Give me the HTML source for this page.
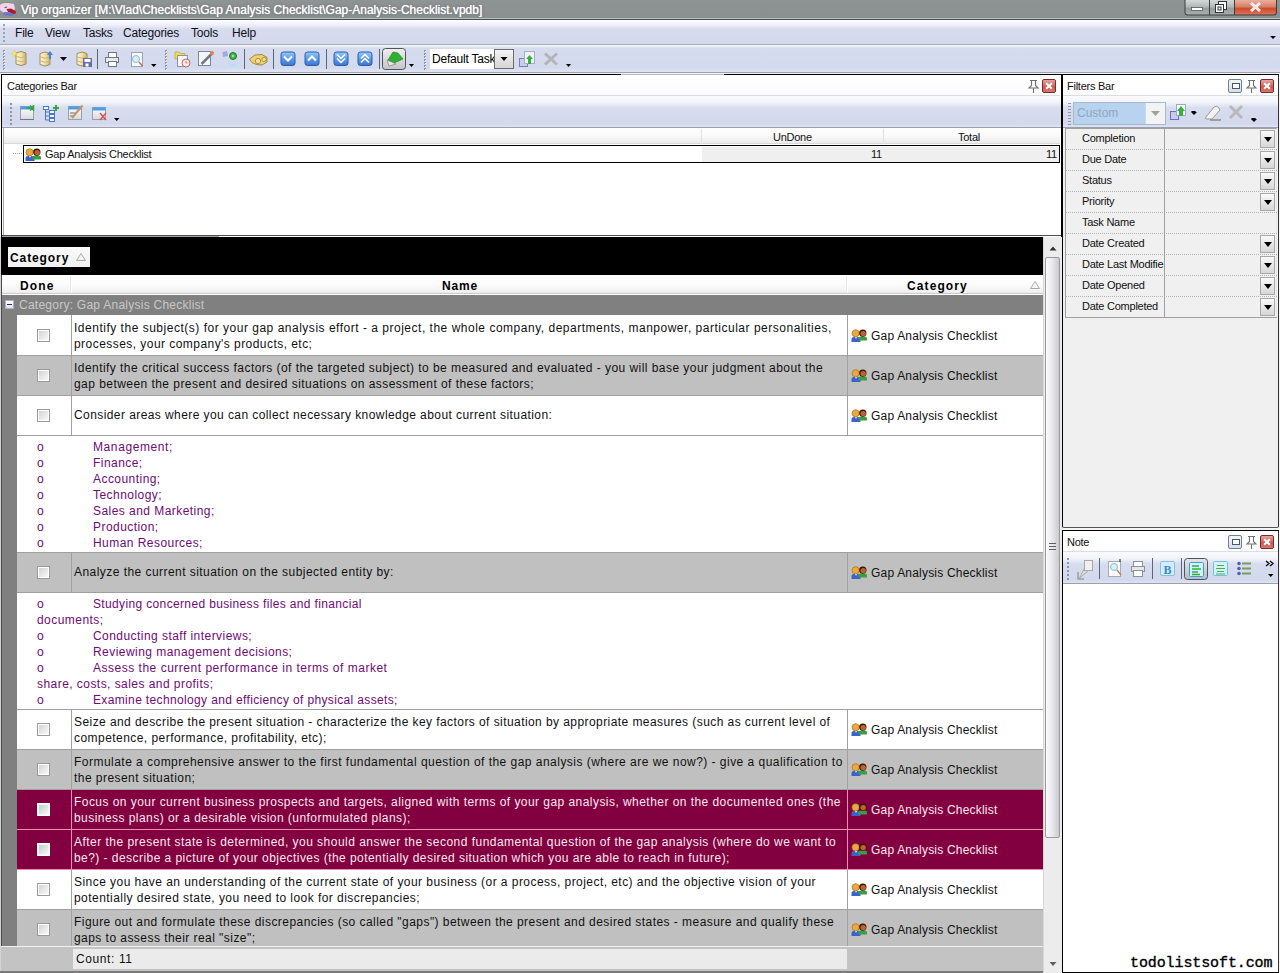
<!DOCTYPE html>
<html><head><meta charset="utf-8">
<style>
*{box-sizing:border-box;margin:0;padding:0}
html,body{width:1280px;height:973px;overflow:hidden;background:#f4f4f4;font-family:"Liberation Sans",sans-serif;}
.a{position:absolute}
.nw{white-space:nowrap}
/* title */
#title{left:0;top:0;width:1280px;height:18px;background:linear-gradient(#8e9494,#8a9090);}
#title .t{left:21px;top:2px;font-size:12px;color:#fff;text-shadow:0 0 1px #fff,0 0 3px #4a5050;line-height:16px}
#menubar{left:0;top:20px;width:1280px;height:25px;background:linear-gradient(#fdfdff 0px,#eef0f8 5px,#d6dcee 9px,#d3d9ec 24px);border-bottom:1px solid #a9adb8}
.menu{top:6px;font-size:12px;letter-spacing:-0.2px;color:#101018;line-height:15px}
#toolbar{left:0;top:46px;width:1280px;height:27px;background:linear-gradient(#f0f2fa 0px,#d6dcee 2px,#d4daee 22px,#dfe3f3 25px);border-bottom:1px solid #9da2ad}
.grip{width:3px;background:repeating-linear-gradient(#8e96a8 0 1px,transparent 1px 3px)}
.sep{width:1px;background:#6f7a90;border-right:1px solid #fff;box-sizing:content-box}
/* panels */
.panel{border:1px solid #000;background:#fff}
.ptitle{font-size:11px;letter-spacing:-0.25px;color:#111;line-height:14px}
.ptb{background:linear-gradient(#fafbfe 0px,#f3f5fb 6px,#d7ddef 12px,#d3d9ec 28px,#dfe3f3 31px);border-bottom:1px solid #9aa0ac}
.gtext{font-size:12px;letter-spacing:0.45px;line-height:16px;color:#111}

/* grid */
.row{left:17px;width:1027px;border-bottom:1px solid #a0a0a0}
.row::before{content:"";position:absolute;left:54px;top:0;bottom:0;width:1px;background:#a0a0a0}
.row::after{content:"";position:absolute;left:830px;top:0;bottom:0;width:1px;background:#a0a0a0}
.rw{background:#fff}.rg{background:#c0c0c0}
.rr{background:#82003f;border-bottom-color:#e88fb4}
.rr::before,.rr::after{background:#e88fb4}
.rr .gtext{color:#fbe8f0}
.cb{left:20px;width:13px;height:13px;border:1px solid #9a9a9a;background:linear-gradient(135deg,#cfcfcf 0%,#f4f4f4 80%);box-shadow:inset 0 0 0 1px #fff}
.rr .cb{border-color:#fff;background:linear-gradient(135deg,#b9cbc4 0%,#eef2f0 80%);box-shadow:inset 0 0 0 1px #f6f6f6}
.txt{left:57px}
.cat{left:834px;width:190px;height:16px}
.ppl{left:0;top:1px;width:16px;height:13px}
.prev{left:17px;width:1027px;background:#fff;border-bottom:1px solid #a0a0a0}
.pl{font-size:12px;letter-spacing:0.45px;line-height:16px;color:#720a72}
.hdr{font-size:12px;font-weight:bold;letter-spacing:0.8px;line-height:16px;color:#000}

.xbtn{width:14px;height:14px;border:1px solid #7a2a2a;border-radius:2px;background:linear-gradient(#e6a4a0,#c85a50 60%,#d87870)}
.xbtn::before,.xbtn::after{content:"";position:absolute;left:2px;top:5px;width:8px;height:2px;background:#fff;transform:rotate(45deg)}
.xbtn::after{transform:rotate(-45deg)}
.fbtn{width:14px;height:14px;border:1px solid #6f7f96;border-radius:2px;background:linear-gradient(#f4f6fa,#d8dee8)}
.fbtn::before{content:"";position:absolute;left:3px;top:3px;width:6px;height:4px;border:1px solid #4a586e;background:#fff}
.prow{left:3px;width:211px;height:21px;border-bottom:1px dotted #b4b4b4}
.ddb{left:194px;top:1px;width:15px;height:18px;border:1px solid #a8a8a8;background:linear-gradient(#fafafa,#d6d6d6)}
.ddb::before{content:"";position:absolute;left:3px;top:6px;border-left:4px solid transparent;border-right:4px solid transparent;border-top:5px solid #000}
.arr{width:0;height:0;border-left:3px solid transparent;border-right:3px solid transparent;border-top:3px solid #000}
</style></head><body>
<div id="title" class="a">
  <div class="a t nw">Vip organizer [M:\Vlad\Checklists\Gap Analysis Checklist\Gap-Analysis-Checklist.vpdb]</div>
</div>
<div class="a" style="left:0;top:18px;width:1280px;height:1px;background:#b8bdbd"></div>
<div class="a" style="left:0;top:19px;width:1280px;height:1px;background:#4a5050"></div>
<div id="menubar" class="a">
  <svg class="a" style="left:2px;top:3px" width="4" height="20"><g fill="#9aa2b4"><rect x="1" y="1" width="2" height="2"/><rect x="1" y="5" width="2" height="2"/><rect x="1" y="9" width="2" height="2"/><rect x="1" y="13" width="2" height="2"/><rect x="1" y="17" width="2" height="2"/></g></svg>
  <div class="a menu nw" style="left:15px">File</div>
  <div class="a menu nw" style="left:45px">View</div>
  <div class="a menu nw" style="left:83px">Tasks</div>
  <div class="a menu nw" style="left:123px">Categories</div>
  <div class="a menu nw" style="left:191px">Tools</div>
  <div class="a menu nw" style="left:232px">Help</div>
</div>
<div id="toolbar" class="a"></div>
<div class="a nw" style="left:432px;top:52px;width:62px;overflow:hidden;font-size:12px;line-height:15px;letter-spacing:-0.2px;color:#000;z-index:2">Default Task</div>

<!-- Categories bar -->
<div id="catbar" class="a" style="left:1px;top:74px;width:1061px;height:163px;border:1px solid #000;border-bottom:0;background:#fff">
  <!-- title -->
  <div class="a" style="left:1px;top:0;width:1057px;height:21px;background:linear-gradient(#fff,#fbfbfc);border-bottom:1px solid #dcdde2"></div>
  <div class="a ptitle nw" style="left:5px;top:4px">Categories Bar</div>
  <div class="a" id="cpin" style="left:1026px;top:5px;width:11px;height:13px"></div>
  <div class="a xbtn" style="left:1040px;top:4px"></div>
  <!-- toolbar -->
  <div class="a ptb" style="left:0;top:21px;width:1059px;height:32px"></div>
  <!-- header -->
  <div class="a" style="left:2px;top:53px;width:1056px;height:16px;background:linear-gradient(#fff 0,#fafafa 7px,#ececec 15px);border-bottom:1px solid #d8d8d8"></div>
  <div class="a" style="left:1px;top:53px;width:1px;height:107px;background:#a8a8a8"></div>
  <div class="a" style="left:699px;top:54px;width:1px;height:15px;background:#e2e2e2"></div>
  <div class="a" style="left:881px;top:54px;width:1px;height:15px;background:#e2e2e2"></div>
  <div class="a ptitle nw" style="left:771px;top:55px">UnDone</div>
  <div class="a ptitle nw" style="left:956px;top:55px">Total</div>
  <!-- row -->
  <div class="a" style="left:700px;top:72px;width:357px;height:16px;background:#efefef"></div>
  <div class="a" style="left:21px;top:70px;width:1037px;height:18px;border:1px solid #000"></div>
  <div class="a" style="left:11px;top:78px;width:10px;height:1px;background:repeating-linear-gradient(90deg,#a0a0a0 0 1px,transparent 1px 2px)"></div>
  <div class="a ptitle nw" style="left:43px;top:72px;letter-spacing:-0.25px">Gap Analysis Checklist</div>
  <div class="a ptitle nw" style="left:869px;top:72px">11</div>
  <div class="a ptitle nw" style="left:1044px;top:72px">11</div>
  <!-- bottom lines -->
  <div class="a" style="left:0;top:160px;width:1059px;height:1px;background:#505058"></div>
  <div class="a" style="left:0;top:161px;width:217px;height:1px;background:#a0a0a0"></div>
</div>

<div class="a" style="left:621px;top:74px;width:103px;height:1px;background:#b4b6be"></div>
<!-- main grid -->
<div class="a" style="left:1px;top:237px;width:1043px;height:38px;background:#000"></div>
<div class="a" style="left:8px;top:247px;width:82px;height:20px;background:linear-gradient(#fbfbfb,#f0f0f0)"></div>
<div class="a hdr nw" style="left:10px;top:250px;letter-spacing:0.9px">Category</div>
<svg class="a" style="left:76px;top:253px" width="10" height="8"><path d="M5 0.5 L9.5 7.5 L0.5 7.5 Z" fill="none" stroke="#a8a8a8" stroke-width="1"/></svg>
<!-- column header -->
<div class="a" style="left:2px;top:275px;width:1042px;height:20px;background:linear-gradient(#fff 0,#fcfcfc 9px,#f0f0f0 17px,#e8e8e8 18px);border-bottom:1px solid #fff"></div>
<div class="a" style="left:2px;top:293px;width:1042px;height:1px;background:#cdcdcd"></div>
<div class="a" style="left:70px;top:276px;width:1px;height:17px;background:#e6e6e6"></div>
<div class="a" style="left:71px;top:276px;width:1px;height:17px;background:#fff"></div>
<div class="a" style="left:846px;top:276px;width:1px;height:17px;background:#e6e6e6"></div>
<div class="a" style="left:847px;top:276px;width:1px;height:17px;background:#fff"></div>
<div class="a hdr nw" style="left:20px;top:278px;letter-spacing:1.1px">Done</div>
<div class="a hdr nw" style="left:442px;top:278px">Name</div>
<div class="a hdr nw" style="left:907px;top:278px;letter-spacing:1.1px">Category</div>
<svg class="a" style="left:1030px;top:281px" width="10" height="8"><path d="M5 0.5 L9.5 7.5 L0.5 7.5 Z" fill="none" stroke="#a8a8a8" stroke-width="1"/></svg>
<!-- group row + indent -->
<div class="a" style="left:2px;top:295px;width:1042px;height:20px;background:#808080"></div>
<div class="a" style="left:2px;top:315px;width:15px;height:632px;background:#808080"></div>
<div class="a" style="left:0;top:237px;width:1px;height:736px;background:#d4d4d4"></div>
<div class="a" style="left:1px;top:275px;width:1px;height:696px;background:#4a4a4a"></div>
<div class="a" style="left:5px;top:300px;width:9px;height:9px;background:linear-gradient(#fff,#dde0ea);border:1px solid #b0b0b8"></div>
<div class="a" style="left:7px;top:304px;width:5px;height:1px;background:#30305a"></div>
<div class="a gtext nw" style="left:19px;top:297px;color:#c8c8c8;letter-spacing:0.25px">Category: Gap Analysis Checklist</div>
<div class="a row rw" style="top:315px;height:41px">
<div class="a cb" style="top:14px"></div>
<div class="a gtext nw txt" style="top:5px"><span style="letter-spacing:0.510px">Identify the subject(s) for your gap analysis effort - a project, the whole company, departments, manpower, particular personalities,</span><br>processes, your company&#x27;s products, etc;</div>
<div class="a cat" style="top:13px"><svg class="a ppl" width="16" height="13"><use href="#ppl"/></svg><span class="a gtext nw" style="left:20px;top:0;letter-spacing:0.2px">Gap Analysis Checklist</span></div>
</div>
<div class="a row rg" style="top:356px;height:40px">
<div class="a cb" style="top:13px"></div>
<div class="a gtext nw txt" style="top:4px">Identify the critical success factors (of the targeted subject) to be measured and evaluated - you will base your judgment about the<br>gap between the present and desired situations on assessment of these factors;</div>
<div class="a cat" style="top:12px"><svg class="a ppl" width="16" height="13"><use href="#ppl"/></svg><span class="a gtext nw" style="left:20px;top:0;letter-spacing:0.2px">Gap Analysis Checklist</span></div>
</div>
<div class="a row rw" style="top:396px;height:40px">
<div class="a cb" style="top:13px"></div>
<div class="a gtext nw txt" style="top:11px"><span style="letter-spacing:0.420px">Consider areas where you can collect necessary knowledge about current situation:</span></div>
<div class="a cat" style="top:12px"><svg class="a ppl" width="16" height="13"><use href="#ppl"/></svg><span class="a gtext nw" style="left:20px;top:0;letter-spacing:0.2px">Gap Analysis Checklist</span></div>
</div>
<div class="a prev" style="top:436px;height:117px">
<div class="a pl nw" style="left:20px;top:3px">o</div><div class="a pl nw" style="left:76px;top:3px"><span style="letter-spacing:0.600px">Management;</span></div>
<div class="a pl nw" style="left:20px;top:19px">o</div><div class="a pl nw" style="left:76px;top:19px">Finance;</div>
<div class="a pl nw" style="left:20px;top:35px">o</div><div class="a pl nw" style="left:76px;top:35px">Accounting;</div>
<div class="a pl nw" style="left:20px;top:51px">o</div><div class="a pl nw" style="left:76px;top:51px">Technology;</div>
<div class="a pl nw" style="left:20px;top:67px">o</div><div class="a pl nw" style="left:76px;top:67px">Sales and Marketing;</div>
<div class="a pl nw" style="left:20px;top:83px">o</div><div class="a pl nw" style="left:76px;top:83px">Production;</div>
<div class="a pl nw" style="left:20px;top:99px">o</div><div class="a pl nw" style="left:76px;top:99px">Human Resources;</div>
</div>
<div class="a row rg" style="top:553px;height:40px">
<div class="a cb" style="top:13px"></div>
<div class="a gtext nw txt" style="top:11px">Analyze the current situation on the subjected entity by:</div>
<div class="a cat" style="top:12px"><svg class="a ppl" width="16" height="13"><use href="#ppl"/></svg><span class="a gtext nw" style="left:20px;top:0;letter-spacing:0.2px">Gap Analysis Checklist</span></div>
</div>
<div class="a prev" style="top:593px;height:117px">
<div class="a pl nw" style="left:20px;top:3px">o</div><div class="a pl nw" style="left:76px;top:3px"><span style="letter-spacing:0.354px">Studying concerned business files and financial</span></div>
<div class="a pl nw" style="left:20px;top:19px">documents;</div>
<div class="a pl nw" style="left:20px;top:35px">o</div><div class="a pl nw" style="left:76px;top:35px">Conducting staff interviews;</div>
<div class="a pl nw" style="left:20px;top:51px">o</div><div class="a pl nw" style="left:76px;top:51px">Reviewing management decisions;</div>
<div class="a pl nw" style="left:20px;top:67px">o</div><div class="a pl nw" style="left:76px;top:67px"><span style="letter-spacing:0.510px">Assess the current performance in terms of market</span></div>
<div class="a pl nw" style="left:20px;top:83px">share, costs, sales and profits;</div>
<div class="a pl nw" style="left:20px;top:99px">o</div><div class="a pl nw" style="left:76px;top:99px"><span style="letter-spacing:0.356px">Examine technology and efficiency of physical assets;</span></div>
</div>
<div class="a row rw" style="top:710px;height:40px">
<div class="a cb" style="top:13px"></div>
<div class="a gtext nw txt" style="top:4px"><span style="letter-spacing:0.428px">Seize and describe the present situation - characterize the key factors of situation by appropriate measures (such as current level of</span><br>competence, performance, profitability, etc);</div>
<div class="a cat" style="top:12px"><svg class="a ppl" width="16" height="13"><use href="#ppl"/></svg><span class="a gtext nw" style="left:20px;top:0;letter-spacing:0.2px">Gap Analysis Checklist</span></div>
</div>
<div class="a row rg" style="top:750px;height:40px">
<div class="a cb" style="top:13px"></div>
<div class="a gtext nw txt" style="top:4px"><span style="letter-spacing:0.473px">Formulate a comprehensive answer to the first fundamental question of the gap analysis (where are we now?) - give a qualification to</span><br>the present situation;</div>
<div class="a cat" style="top:12px"><svg class="a ppl" width="16" height="13"><use href="#ppl"/></svg><span class="a gtext nw" style="left:20px;top:0;letter-spacing:0.2px">Gap Analysis Checklist</span></div>
</div>
<div class="a row rr" style="top:790px;height:40px">
<div class="a cb" style="top:13px"></div>
<div class="a gtext nw txt" style="top:4px">Focus on your current business prospects and targets, aligned with terms of your gap analysis, whether on the documented ones (the<br>business plans) or a desirable vision (unformulated plans);</div>
<div class="a cat" style="top:12px"><svg class="a ppl" width="16" height="13"><use href="#ppl"/></svg><span class="a gtext nw" style="left:20px;top:0;letter-spacing:0.2px">Gap Analysis Checklist</span></div>
</div>
<div class="a row rr" style="top:830px;height:40px">
<div class="a cb" style="top:13px"></div>
<div class="a gtext nw txt" style="top:4px"><span style="letter-spacing:0.473px">After the present state is determined, you should answer the second fundamental question of the gap analysis (where do we want to</span><br>be?) - describe a picture of your objectives (the potentially desired situation which you are able to reach in future);</div>
<div class="a cat" style="top:12px"><svg class="a ppl" width="16" height="13"><use href="#ppl"/></svg><span class="a gtext nw" style="left:20px;top:0;letter-spacing:0.2px">Gap Analysis Checklist</span></div>
</div>
<div class="a row rw" style="top:870px;height:40px">
<div class="a cb" style="top:13px"></div>
<div class="a gtext nw txt" style="top:4px">Since you have an understanding of the current state of your business (or a process, project, etc) and the objective vision of your<br>potentially desired state, you need to look for discrepancies;</div>
<div class="a cat" style="top:12px"><svg class="a ppl" width="16" height="13"><use href="#ppl"/></svg><span class="a gtext nw" style="left:20px;top:0;letter-spacing:0.2px">Gap Analysis Checklist</span></div>
</div>
<div class="a row rg" style="top:910px;height:40px">
<div class="a cb" style="top:13px"></div>
<div class="a gtext nw txt" style="top:4px">Figure out and formulate these discrepancies (so called &quot;gaps&quot;) between the present and desired states - measure and qualify these<br>gaps to assess their real &quot;size&quot;;</div>
<div class="a cat" style="top:12px"><svg class="a ppl" width="16" height="13"><use href="#ppl"/></svg><span class="a gtext nw" style="left:20px;top:0;letter-spacing:0.2px">Gap Analysis Checklist</span></div>
</div>
<!-- footer -->
<div class="a" style="left:1px;top:946px;width:1043px;height:25px;background:#c3c3c3;border-top:1px solid #f0f0f0"></div>
<div class="a" style="left:73px;top:949px;width:774px;height:20px;background:#ebebeb"></div>
<div class="a gtext nw" style="left:76px;top:951px;letter-spacing:0.6px">Count: 11</div>
<div class="a" style="left:0;top:971px;width:1062px;height:2px;background:#7a7a7a"></div>
<!-- scrollbar -->
<div class="a" style="left:1043px;top:237px;width:19px;height:736px;background:#ececec;border-left:1px solid #d8d8d8"></div>


<!-- filters bar -->
<div id="filters" class="a" style="left:1062px;top:74px;width:217px;height:454px;border:1px solid #000;border-bottom-color:#555;border-right-color:#333;border-radius:0 0 2px 2px;background:#f0f0f0">
  <div class="a" style="left:0;top:0;width:215px;height:21px;background:#fff;border-bottom:1px solid #dcdde2"></div>
  <div class="a ptitle nw" style="left:4px;top:4px">Filters Bar</div>
  <div class="a fbtn" style="left:1165px;top:4px;left:165px"></div>
  <div class="a" style="left:183px;top:5px;width:11px;height:13px" id="fpin"></div>
  <div class="a xbtn" style="left:197px;top:4px"></div>
  <div class="a ptb" style="left:0;top:21px;width:215px;height:32px"></div>
  <div class="a grip" style="left:5px;top:28px;height:22px"></div>
  <div class="a" style="left:10px;top:27px;width:93px;height:23px;border:1px solid #a9b9cc;background:#b8d3ef"></div>
  <div class="a" style="left:82px;top:28px;width:20px;height:21px;background:#f3f3f3;border-left:1px solid #d0d8e0"></div>
  <svg class="a" style="left:88px;top:36px" width="9" height="6"><path d="M0 0 L9 0 L4.5 5 Z" fill="#a0a0a0"/></svg>
  <div class="a ptitle nw" style="left:14px;top:31px;font-size:12px;color:#8fa6bf;letter-spacing:0">Custom</div>
  <div class="a arr" style="left:128px;top:37px"></div>
  <div class="a arr" style="left:188px;top:44px"></div>
  <!-- property grid -->
  <div class="a" style="left:2px;top:53px;width:212px;height:190px;border-left:1px solid #a0a0a0;border-right:1px solid #e8e8e8;border-top:1px solid #a0a0a0"></div>
  <div class="a" style="left:101px;top:53px;width:1px;height:189px;background:#a0a0a0"></div>
  <div class="a prow" style="top:54px;"><div class="a ptitle nw" style="left:16px;top:2px;width:82px;overflow:hidden">Completion</div><div class="a ddb"></div></div>
  <div class="a prow" style="top:75px;"><div class="a ptitle nw" style="left:16px;top:2px;width:82px;overflow:hidden">Due Date</div><div class="a ddb"></div></div>
  <div class="a prow" style="top:96px;"><div class="a ptitle nw" style="left:16px;top:2px;width:82px;overflow:hidden">Status</div><div class="a ddb"></div></div>
  <div class="a prow" style="top:117px;"><div class="a ptitle nw" style="left:16px;top:2px;width:82px;overflow:hidden">Priority</div><div class="a ddb"></div></div>
  <div class="a prow" style="top:138px;"><div class="a ptitle nw" style="left:16px;top:2px;width:82px;overflow:hidden">Task Name</div></div>
  <div class="a prow" style="top:159px;"><div class="a ptitle nw" style="left:16px;top:2px;width:82px;overflow:hidden">Date Created</div><div class="a ddb"></div></div>
  <div class="a prow" style="top:180px;"><div class="a ptitle nw" style="left:16px;top:2px;width:82px;overflow:hidden">Date Last Modifie</div><div class="a ddb"></div></div>
  <div class="a prow" style="top:201px;"><div class="a ptitle nw" style="left:16px;top:2px;width:82px;overflow:hidden">Date Opened</div><div class="a ddb"></div></div>
  <div class="a prow" style="top:222px;border-bottom:1px solid #a0a0a0;"><div class="a ptitle nw" style="left:16px;top:2px;width:82px;overflow:hidden">Date Completed</div><div class="a ddb"></div></div>
</div>
<!-- note -->
<div id="note" class="a" style="left:1062px;top:530px;width:217px;height:443px;border:1px solid #000;border-right-color:#333;background:#fff">
  <div class="a" style="left:0;top:0;width:215px;height:21px;background:#fff;border-bottom:1px solid #dcdde2"></div>
  <div class="a ptitle nw" style="left:4px;top:4px">Note</div>
  <div class="a fbtn" style="left:165px;top:4px"></div>
  <div class="a" style="left:183px;top:5px;width:11px;height:13px" id="npin"></div>
  <div class="a xbtn" style="left:197px;top:4px"></div>
  <div class="a ptb" style="left:0;top:21px;width:215px;height:32px"></div>
  
  <div class="a nw" style="left:67px;top:425px;font-family:'Liberation Mono',monospace;font-weight:normal;-webkit-text-stroke:0.35px #000;font-size:15px;line-height:15px;letter-spacing:-0.1px;color:#000">todolistsoft.com</div>
</div>
<!-- ICONS1 -->
<svg class="a" style="left:0;top:0;pointer-events:none" width="1280" height="973">
<defs>
 <linearGradient id="gdb" x1="0" x2="1" y1="0" y2="0"><stop offset="0" stop-color="#fff6d8"/><stop offset="0.6" stop-color="#f0dc98"/><stop offset="1" stop-color="#c8b070"/></linearGradient>
 <linearGradient id="gbl" x1="0" x2="0" y1="0" y2="1"><stop offset="0" stop-color="#92c8fa"/><stop offset="0.5" stop-color="#5c9cea"/><stop offset="1" stop-color="#3a74d0"/></linearGradient>
 <linearGradient id="gtg" x1="0" x2="0" y1="0" y2="1"><stop offset="0" stop-color="#f0f0f0"/><stop offset="1" stop-color="#c4c4c4"/></linearGradient>
 <linearGradient id="gdd" x1="0" x2="0" y1="0" y2="1"><stop offset="0" stop-color="#f6f6f6"/><stop offset="1" stop-color="#d4d4d4"/></linearGradient>
 <linearGradient id="gwin" x1="0" x2="0" y1="0" y2="1"><stop offset="0" stop-color="#fafafa"/><stop offset="1" stop-color="#dcdcdc"/></linearGradient>
 <g id="grip"><rect x="0" y="0" width="2" height="2" fill="#8c96aa"/><rect x="1" y="1" width="1" height="1" fill="#fff"/></g>
 <g id="db">
   <path d="M0.5 2.5 Q5.5 -0.5 10.5 2.5 L10.5 13.5 Q5.5 16.5 0.5 13.5 Z" fill="url(#gdb)" stroke="#9c8c5a" stroke-width="1"/>
   <path d="M1 6 Q5.5 8.5 10 6 M1 10 Q5.5 12.5 10 10" fill="none" stroke="#c8b480" stroke-width="1"/>
 </g>
 <g id="ppl">
   <path d="M0.5 13 L0.5 10 Q0.5 8 3 8 L7 8 Q9.5 8 9.5 10 L9.5 13 Z" fill="#3a62c8"/>
   <path d="M4 8 L5 10 L6 8 Z" fill="#fff"/>
   <circle cx="4.6" cy="4.3" r="3.6" fill="#eca83a" stroke="#a87418" stroke-width="0.7"/>
   <path d="M7.5 11.5 L7.5 9.2 Q7.5 7.6 10 7.6 L13.5 7.6 Q16 7.6 16 9.2 L16 11.5 Z" fill="#38a044"/>
   <circle cx="11.8" cy="4.1" r="3.7" fill="#3a1a08"/>
   <circle cx="12.2" cy="4.6" r="2.7" fill="#c0622e"/>
 </g>
 <g id="bbtn"><rect x="0.5" y="0.5" width="14" height="13.5" rx="2.5" fill="url(#gbl)" stroke="#2a5cae" stroke-width="1"/></g>
 <g id="pin"><path d="M2 1 L9 1 M3.5 1 L3.5 6 L1 8 L10 8 L7.5 6 L7.5 1 M5.5 8 L5.5 12" fill="none" stroke="#6a6a6a" stroke-width="1.2"/><rect x="4" y="2" width="3" height="5" fill="#e8e8e8"/></g>
</defs>
<!-- main toolbar -->
<use href="#grip" x="3" y="50"/><use href="#grip" x="3" y="53"/><use href="#grip" x="3" y="56"/><use href="#grip" x="3" y="59"/><use href="#grip" x="3" y="62"/><use href="#grip" x="3" y="65"/><use href="#grip" x="3" y="68"/>
<use href="#db" x="15.5" y="50.5"/>
<path d="M14.5 50 L15.3 52.8 L18 53.5 L15.3 54.2 L14.5 57 L13.7 54.2 L11 53.5 L13.7 52.8 Z" fill="#fff060" stroke="#e8c820" stroke-width="0.5"/>
<use href="#db" x="39.5" y="51"/>
<path d="M50 51 L53 55 L51 55 L51 59 L49 59 L49 55 L47 55 Z" fill="#4a80d8"/>
<path d="M60 57 L67 57 L63.5 61 Z" fill="#000"/>
<use href="#db" x="76.5" y="51"/>
<rect x="83" y="58" width="9" height="9" fill="#6870a8"/><rect x="84.5" y="59" width="6" height="3" fill="#fff"/><rect x="85.5" y="63.5" width="3" height="3" fill="#fff"/>
<rect x="97" y="49" width="1" height="20" fill="#5c667a"/>
<!-- printer -->
<rect x="108.5" y="52.5" width="8" height="5" fill="#fff" stroke="#6e7884"/>
<rect x="105.5" y="57.5" width="13" height="5" fill="#e8eaee" stroke="#6e7884"/>
<rect x="108.5" y="61.5" width="8" height="5" fill="#fff" stroke="#6e7884"/>
<!-- preview -->
<rect x="131.5" y="52.5" width="11" height="14" fill="#fbfbfb" stroke="#9aa4b4"/>
<circle cx="136" cy="59" r="3.5" fill="#dcf0fa" stroke="#88bcd8"/>
<path d="M139 62 L142.5 66" stroke="#c87050" stroke-width="1.5"/>
<path d="M151 64 L156.5 64 L153.75 67 Z" fill="#000"/>
<use href="#grip" x="165" y="50"/><use href="#grip" x="165" y="53"/><use href="#grip" x="165" y="56"/><use href="#grip" x="165" y="59"/><use href="#grip" x="165" y="62"/><use href="#grip" x="165" y="65"/><use href="#grip" x="165" y="68"/>
<!-- folder clock -->
<path d="M175 52 L179 52 L180 53.5 L185 53.5 L185 59 L175 59 Z" fill="#f2dc50" stroke="#c8a830" stroke-width="0.8"/>
<rect x="177.5" y="55.5" width="10" height="11" fill="#f8f8fc" stroke="#8894aa"/>
<circle cx="186" cy="63" r="4" fill="#fbeaea" stroke="#c86060" stroke-width="1"/>
<path d="M186 61 L186 63 L187.5 63" stroke="#c86060" stroke-width="0.8" fill="none"/>
<!-- edit -->
<rect x="198.5" y="51.5" width="12" height="14" fill="#f4f6fa" stroke="#7c889a"/>
<path d="M201.5 64 L211.5 54" stroke="#707a86" stroke-width="2.5"/>
<circle cx="212" cy="53" r="2" fill="#e8804a"/>
<!-- sync -->
<path d="M222.5 52 L227 51 L228 56 L223 57 Z" fill="#9aa2e4" opacity="0.9"/>
<path d="M228 60 Q233 68 238 60 L237.5 65 Q233 68.5 228.5 65 Z" fill="#b8def6"/>
<circle cx="233" cy="56" r="3.5" fill="#44b04c" stroke="#1f7a28" stroke-width="1"/>
<circle cx="233" cy="56" r="1.2" fill="#a8e0a8"/>
<rect x="244" y="49" width="1" height="20" fill="#5c667a"/>
<!-- glasses -->
<path d="M249.5 59 L255 55 L262 54.5 L267 57.5 L267 62 L262 65 L256.5 64.5 L252 62.5 Z" fill="#ecd27a" stroke="#a27c2a" stroke-width="0.9"/>
<circle cx="258" cy="61" r="2.6" fill="#f6e6a0" stroke="#8c6c1c" stroke-width="0.7"/>
<circle cx="264" cy="59.5" r="2.2" fill="#f0dc88" stroke="#8c6c1c" stroke-width="0.6"/>
<rect x="273" y="49" width="1" height="20" fill="#5c667a"/>
<!-- blue buttons -->
<use href="#bbtn" x="280.5" y="51.5"/><path d="M284 56.5 L288 60.5 L292 56.5" fill="none" stroke="#fff" stroke-width="2"/>
<use href="#bbtn" x="304.5" y="51.5"/><path d="M308 60.5 L312 56.5 L316 60.5" fill="none" stroke="#fff" stroke-width="2"/>
<rect x="326" y="49" width="1" height="20" fill="#5c667a"/>
<use href="#bbtn" x="333.5" y="51.5"/><path d="M337 54.5 L341 58.5 L345 54.5 M337 58.5 L341 62.5 L345 58.5" fill="none" stroke="#fff" stroke-width="1.5"/>
<use href="#bbtn" x="357.5" y="51.5"/><path d="M361 58.5 L365 54.5 L369 58.5 M361 62.5 L365 58.5 L369 62.5" fill="none" stroke="#fff" stroke-width="1.5"/>
<rect x="379" y="49" width="1" height="20" fill="#5c667a"/>
<!-- toggle -->
<rect x="382.5" y="48.5" width="23" height="21" rx="3" fill="url(#gtg)" stroke="#4c545c"/>
<path d="M388 60 L393 52 L398 53 L403 59 L394 63 Z" fill="#30b030" stroke="#1a7a1a" stroke-width="0.6"/>
<path d="M387 60 L389 66 L396 64 L394 63 Z" fill="#e8e8e8" stroke="#707070" stroke-width="0.6"/>
<path d="M409 64 L414 64 L411.5 67 Z" fill="#000"/>
<use href="#grip" x="424" y="50"/><use href="#grip" x="424" y="53"/><use href="#grip" x="424" y="56"/><use href="#grip" x="424" y="59"/><use href="#grip" x="424" y="62"/><use href="#grip" x="424" y="65"/><use href="#grip" x="424" y="68"/>
<!-- combo -->
<rect x="430" y="49" width="65" height="20" fill="#fff"/>
<rect x="494.5" y="49.5" width="19" height="19" fill="url(#gdd)" stroke="#6c6c6c"/>
<path d="M500.5 57 L507.5 57 L504 61 Z" fill="#000"/>
<!-- save arrow -->
<rect x="519.5" y="58.5" width="8" height="8" fill="#c8d0e8" stroke="#7880b8"/>
<rect x="524.5" y="51.5" width="10" height="12" fill="#f0f4fa" stroke="#a0b0c8"/>
<path d="M529.5 55 L533 59 L531 59 L531 64 L528 64 L528 59 L526 59 Z" fill="#38b040"/>
<path d="M545 53.5 L557 64.5 M557 53.5 L545 64.5" stroke="#b4b4b4" stroke-width="3"/>
<path d="M566 64 L571 64 L568.5 67 Z" fill="#000"/>
</svg>

<!-- /ICONS1 -->
<!-- ICONS2 -->
<svg class="a" style="left:0;top:0;pointer-events:none" width="1280" height="973">
<defs>
 <linearGradient id="gthumb" x1="0" x2="1" y1="0" y2="0"><stop offset="0" stop-color="#fdfdfd"/><stop offset="0.5" stop-color="#e8e8ec"/><stop offset="1" stop-color="#c8c8cc"/></linearGradient>
 <linearGradient id="gmin" x1="0" x2="0" y1="0" y2="1"><stop offset="0" stop-color="#d4d8d8"/><stop offset="0.5" stop-color="#b0b6b6"/><stop offset="0.55" stop-color="#969c9c"/><stop offset="1" stop-color="#a8aeae"/></linearGradient>
 <linearGradient id="gcls" x1="0" x2="0" y1="0" y2="1"><stop offset="0" stop-color="#eab0a0"/><stop offset="0.5" stop-color="#d87a60"/><stop offset="0.55" stop-color="#c84a28"/><stop offset="1" stop-color="#e07058"/></linearGradient>
 <linearGradient id="gdoc" x1="0" x2="0" y1="0" y2="1"><stop offset="0" stop-color="#ffffff"/><stop offset="1" stop-color="#d8dade"/></linearGradient>
 <linearGradient id="gpress" x1="0" x2="0" y1="0" y2="1"><stop offset="0" stop-color="#e4e4ea"/><stop offset="1" stop-color="#b8bcc8"/></linearGradient>
</defs>
<!-- title bar app icon -->
<path d="M0 5 Q2 2.5 8 3 L14 4 L15 9 L12 12 L4 13 L0 10 Z" fill="#f2d4ea"/>
<path d="M4.5 7.5 L7 7" stroke="#505060" stroke-width="1.2"/>
<path d="M6.5 9 L11 8.5 L15.5 11 L16 13.5 L13 14 L8 12 Z" fill="#b01828"/>
<path d="M4 12 L11 12.5 L14 14.5 L12 16 L5 15.5 L3 14 Z" fill="#6878cc"/>
<rect x="0" y="0" width="14" height="1.5" fill="#8aa88a" opacity="0.6"/>
<!-- window buttons -->
<path d="M1184.5 0 L1184.5 12 Q1184.5 15.5 1188 15.5 L1273.5 15.5 Q1277 15.5 1277 12 L1277 0" fill="#3a3e40"/>
<path d="M1185.5 0 L1185.5 12 Q1185.5 14.5 1188 14.5 L1209 14.5 L1209 0 Z" fill="url(#gmin)"/>
<rect x="1210" y="0" width="24" height="14.5" fill="url(#gmin)"/>
<path d="M1235 0 L1235 14.5 L1273.5 14.5 Q1276 14.5 1276 12 L1276 0 Z" fill="url(#gcls)"/>
<rect x="1191.5" y="7.5" width="11" height="3" fill="#fff" stroke="#505858" stroke-width="0.8"/>
<rect x="1218.5" y="1.5" width="8" height="8" fill="#fff" stroke="#2c3434" stroke-width="1"/>
<rect x="1215.5" y="4.5" width="8" height="8" fill="#fff" stroke="#2c3434" stroke-width="1"/>
<rect x="1218" y="7" width="3" height="3" fill="#fff" stroke="#2c3434" stroke-width="1"/>
<path d="M1251 3 L1260 11 M1260 3 L1251 11" stroke="#fff" stroke-width="2.8"/>
<path d="M1251 3 L1260 11 M1260 3 L1251 11" stroke="#40404a" stroke-width="0.6" opacity="0.3"/>
<!-- menubar right arrow -->
<path d="M1270 36 L1276 36 L1273 39 Z" fill="#000"/>
<!-- categories bar title pin -->
<path d="M1030 80.5 L1037 80.5 M1031.5 81 L1031.5 85.5 L1029 88 L1038 88 L1035.5 85.5 L1035.5 81 M1033.5 88 L1033.5 93" fill="none" stroke="#707070" stroke-width="1.1"/>
<!-- cat toolbar grip -->
<g fill="#8c96aa"><rect x="10" y="103" width="2" height="2"/><rect x="10" y="107" width="2" height="2"/><rect x="10" y="111" width="2" height="2"/><rect x="10" y="115" width="2" height="2"/><rect x="10" y="119" width="2" height="2"/><rect x="10" y="123" width="2" height="2"/></g>
<!-- cat icon1 -->
<rect x="20.5" y="106.5" width="13" height="13" fill="url(#gdoc)" stroke="#9aa0aa"/>
<rect x="20.5" y="106.5" width="13" height="3" fill="#4aa0e8"/>
<rect x="20" y="119" width="14" height="1" fill="#707880"/>
<path d="M26 108 L32 108 M30 105.5 L33 108 L30 110.5 M33.5 105 L33.5 111" stroke="#38a040" stroke-width="1.5" fill="none"/>
<!-- cat icon2 tree -->
<g fill="#eef4fc" stroke="#4a78c0" stroke-width="1"><rect x="43.5" y="106.5" width="5" height="3"/><rect x="49.5" y="110.5" width="5" height="3"/><rect x="49.5" y="114.5" width="5" height="3"/><rect x="49.5" y="118.5" width="5" height="3"/></g>
<path d="M45.5 110 L45.5 120 M45.5 112 L49.5 112 M45.5 116 L49.5 116 M45.5 120 L49.5 120" stroke="#4a78c0" stroke-width="1" fill="none"/>
<path d="M56 105 L56 111 M53 108 L59 108" stroke="#38a048" stroke-width="2"/>
<!-- cat icon3 -->
<rect x="68.5" y="106.5" width="13" height="13" fill="url(#gdoc)" stroke="#9aa0aa"/>
<rect x="68.5" y="106.5" width="13" height="3" fill="#4aa0e8"/>
<path d="M70 113 L76 113 M70 116 L74 116" stroke="#707880" stroke-width="1"/>
<path d="M72 118 L82.5 105.5" stroke="#d09060" stroke-width="2"/>
<!-- cat icon4 -->
<rect x="92.5" y="107.5" width="13" height="12" fill="url(#gdoc)" stroke="#9aa0aa"/>
<rect x="92.5" y="107.5" width="13" height="3" fill="#4aa0e8"/>
<path d="M100 113 L106 120 M106 113 L100 120" stroke="#e05050" stroke-width="1.5"/>
<path d="M114 118 L119.5 118 L116.75 121 Z" fill="#000"/>
<!-- tree people icon -->
<use href="#ppl" x="25" y="148"/>
<!-- filters bar title buttons: pin -->
<path d="M1248 80.5 L1255 80.5 M1249.5 81 L1249.5 85.5 L1247 88 L1256 88 L1253.5 85.5 L1253.5 81 M1251.5 88 L1251.5 93" fill="none" stroke="#707070" stroke-width="1.1"/>
<!-- note title pin -->
<path d="M1248 536.5 L1255 536.5 M1249.5 537 L1249.5 541.5 L1247 544 L1256 544 L1253.5 541.5 L1253.5 537 M1251.5 544 L1251.5 549" fill="none" stroke="#707070" stroke-width="1.1"/>
<!-- filters toolbar icons -->
<rect x="1170.5" y="111.5" width="8" height="8" fill="#c8ccf0" stroke="#6a70c8"/>
<rect x="1176.5" y="104.5" width="9" height="11" fill="#f4f6fa" stroke="#a0aac0"/>
<path d="M1181 106 L1185 111 L1183 111 L1183 116 L1179 116 L1179 111 L1177 111 Z" fill="#38b040"/>
<path d="M1191 111 L1196 111 L1193.5 114 Z" fill="#000"/>
<path d="M1206 117 L1214 107 Q1217 105 1219 108 L1220 110 L1212 119 L1207 119 Q1204 119 1206 117 Z" fill="#f2f2f2" stroke="#9a9a9a" stroke-width="1"/>
<path d="M1210 120 L1221 120" stroke="#8a8a8a" stroke-width="1.5"/>
<path d="M1230 106 L1242 118 M1242 106 L1230 118" stroke="#b8b8b8" stroke-width="3"/>
<path d="M1251 118 L1256 118 L1253.5 121 Z" fill="#000"/>
<!-- note toolbar -->
<path d="M1079 579 L1083 575 L1087 572 L1091 566 L1089 563 L1085 567 Z" fill="#d8dcd8" stroke="#a0a4a0" stroke-width="0.8"/>
<rect x="1084.5" y="560.5" width="8" height="10" fill="#f0f0f0" stroke="#a8a8a8"/>
<path d="M1078 572 L1078 579 L1084 579" stroke="#9aa0a0" stroke-width="1.5" fill="none"/>
<rect x="1099" y="558" width="1" height="21" fill="#5c667a"/>
<rect x="1108.5" y="561.5" width="12" height="15" fill="#fbfbfb" stroke="#a4aab8"/>
<circle cx="1114" cy="567" r="3.5" fill="#dcf0fa" stroke="#88bcd8"/>
<path d="M1117 570 L1121 575" stroke="#d07850" stroke-width="1.3"/>
<path d="M1120 559 L1120 562" stroke="#202020" stroke-width="1"/>
<rect x="1133.5" y="561.5" width="9" height="5" fill="#fff" stroke="#8a929a"/>
<rect x="1131.5" y="566.5" width="13" height="5" fill="#e4e6ea" stroke="#8a929a"/>
<rect x="1133.5" y="570.5" width="9" height="6" fill="#fff" stroke="#8a929a"/>
<rect x="1152" y="558" width="1" height="21" fill="#5c667a"/>
<rect x="1160.5" y="561.5" width="14" height="14" rx="1.5" fill="#d6eefc" stroke="#88c0e4"/>
<text x="1163.5" y="573.5" font-family="Liberation Serif" font-weight="bold" font-size="12" fill="#3a8acc">B</text>
<rect x="1181" y="558" width="1" height="21" fill="#5c667a"/>
<rect x="1184.5" y="558.5" width="23" height="21" rx="3" fill="url(#gpress)" stroke="#4c545e"/>
<rect x="1189.5" y="562.5" width="14" height="14" rx="1" fill="#d6f0fa" stroke="#3aa0d0"/>
<path d="M1192 566 L1199 566 M1192 569 L1201 569 M1192 572 L1198 572 M1192 574.5 L1200 574.5" stroke="#30b040" stroke-width="1.4"/>
<rect x="1213.5" y="561.5" width="14" height="14" rx="1" fill="#d6f0fa" stroke="#70c0e0"/>
<path d="M1217 565.5 L1224 565.5 M1216 568.5 L1225 568.5 M1217 571.5 L1224 571.5 M1216 574 L1225 574" stroke="#40b050" stroke-width="1.2"/>
<g fill="#4a64b0"><circle cx="1239" cy="563.5" r="1.8"/><circle cx="1239" cy="568.5" r="1.8"/><circle cx="1239" cy="573.5" r="1.8"/></g>
<path d="M1242 563.5 L1251 563.5 M1242 568.5 L1251 568.5 M1242 573.5 L1251 573.5" stroke="#7a9a60" stroke-width="1.8"/>
<path d="M1266 561 L1269 563.5 L1266 566 M1270 561 L1273 563.5 L1270 566" stroke="#000" stroke-width="1.3" fill="none"/>
<path d="M1268 574 L1273.5 574 L1270.75 577 Z" fill="#000"/>
<g fill="#8c96aa"><rect x="1067" y="558" width="2" height="2"/><rect x="1067" y="562" width="2" height="2"/><rect x="1067" y="566" width="2" height="2"/><rect x="1067" y="570" width="2" height="2"/><rect x="1067" y="574" width="2" height="2"/><rect x="1067" y="578" width="2" height="2"/></g>
<!-- scrollbar -->
<path d="M1049.5 250.5 L1053 246.5 L1056.5 250.5 Z" fill="#303030"/>
<rect x="1045.5" y="257.5" width="14" height="580" rx="1.5" fill="url(#gthumb)" stroke="#9a9a9a"/>
<path d="M1049 543.5 L1056 543.5 M1049 546.5 L1056 546.5 M1049 549.5 L1056 549.5" stroke="#606060" stroke-width="1.2"/>
<path d="M1049.5 962 L1056.5 962 L1053 966 Z" fill="#606060"/>
</svg>

<!-- /ICONS2 -->
</body></html>
